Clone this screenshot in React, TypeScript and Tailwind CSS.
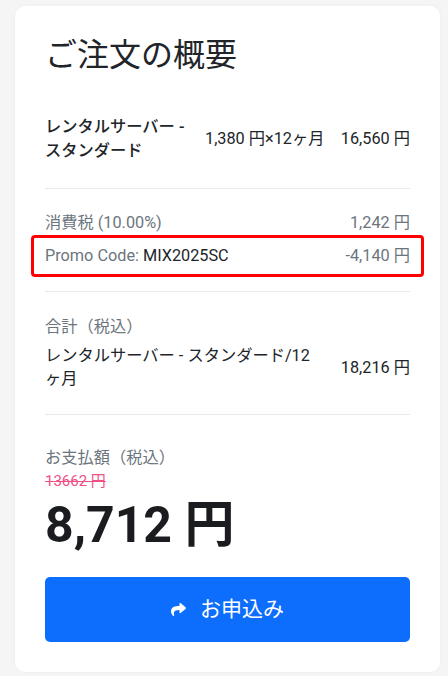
import React from 'react';
import { FaShare } from 'react-icons/fa';

const font = "font-['Roboto','Noto_Sans_CJK_JP',sans-serif]";

export default function App() {
  return (
    <div className={`min-h-[676px] bg-[#f5f5f5] pt-[6px] pl-[15px] pr-[8px] ${font}`}>
      <div className="bg-white rounded-[10px] shadow-[0_0_4px_rgba(0,0,0,0.04)] px-[30px] pt-[30px] pb-[30px] text-[#212529]">
        {/* Title */}
        <h2 className="text-[32px] leading-[38px] font-normal">ご注文の概要</h2>

        {/* Item */}
        <div className="mt-[41px] pb-[25px] border-b border-[#e7e9ec] flex items-center text-[16.25px] leading-[24px]">
          <div className="w-[152px] mr-[8px] font-medium">レンタルサーバー - スタンダード</div>
          <div className="whitespace-nowrap">1,380 円×12ヶ月</div>
          <div className="ml-auto whitespace-nowrap">16,560 円</div>
        </div>

        {/* Tax + promo */}
        <div className="pt-[22px] pb-[14px] border-b border-[#e7e9ec] text-[16.25px] leading-[24px] text-[#6c757d]">
          <div className="flex justify-between">
            <span>消費税 (10.00%)</span>
            <span>1,242 円</span>
          </div>
          <div className="-mx-[14px] px-[11px] py-[6px] border-[3px] border-[#ff0000] rounded-[4px] flex justify-between">
            <span>
              Promo Code: <span className="text-[#212529]">MIX2025SC</span>
            </span>
            <span>-4,140 円</span>
          </div>
        </div>

        {/* Total */}
        <div className="pt-[23px] pb-[24px] border-b border-[#e7e9ec] text-[16.25px]">
          <div className="text-[#6c757d] leading-[24px] mb-[5px]">合計（税込）</div>
          <div className="flex items-center leading-[23px]">
            <div className="w-[272px]">レンタルサーバー - スタンダード/12ヶ月</div>
            <div className="ml-auto whitespace-nowrap">18,216 円</div>
          </div>
        </div>

        {/* Payment */}
        <div className="pt-[31px]">
          <div className="text-[16.25px] leading-[24px] text-[#6c757d]">お支払額（税込）</div>
          <div className="text-[15px] leading-[22px] text-[#ef4f86] line-through">13662 円</div>
          <div className="mt-[2px] text-[50px] leading-[62px] font-bold text-[#1b1c1f]">8,712 円</div>
          <button className="mt-[21px] w-full h-[65px] bg-[#0d6efd] rounded-[5px] text-white text-[21px] flex items-center justify-center gap-[14px]">
            <FaShare className="w-[15px] h-[15px]" />
            <span>お申込み</span>
          </button>
        </div>
      </div>
    </div>
  );
}
